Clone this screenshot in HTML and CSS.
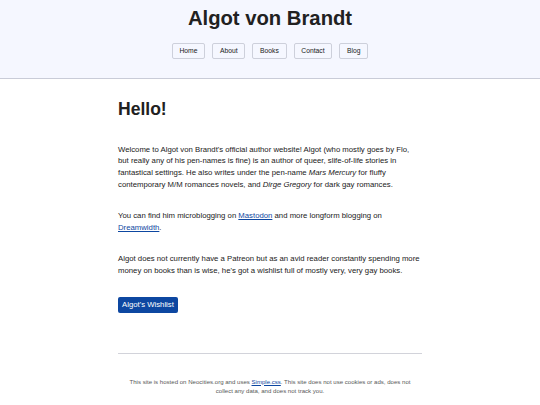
FILE: index.html
```
<!DOCTYPE html>
<html lang="en">
<head>
    <meta charset="UTF-8">
    <meta name="viewport" content="width=device-width, initial-scale=1.0">
    <title>Algot von Brandt</title>
    <link rel="stylesheet" href="styles.css">
</head>
<body>
    <header>
        <h1>Algot von Brandt</h1>
        <nav>
            <a href="index.html">Home</a>
            <a href="about.html">About</a>
            <a href="books.html">Books</a>
            <a href="contact.html">Contact</a>
            <a href="blog.html">Blog</a>
        </nav>
    </header>
    <main>
        <h2>Hello!</h2>
        <p>Welcome to Algot von Brandt's official author website! Algot (who mostly goes by Flo, but really any of his pen-names is fine) is an author of queer, slife-of-life stories in fantastical settings. He also writes under the pen-name <em>Mars Mercury</em> for fluffy contemporary M/M romances novels, and <em>Dirge Gregory</em> for dark gay romances.</p>
        <p>You can find him microblogging on <a href="#">Mastodon</a> and more longform blogging on <a href="#">Dreamwidth</a>.</p>
        <p>Algot does not currently have a Patreon but as an avid reader constantly spending more money on books than is wise, he's got a wishlist full of mostly very, very gay books.</p>
        <a class="button" href="#">Algot's Wishlist</a>
    </main>
    <footer>
        <p>This site is hosted on Neocities.org and uses <a href="#">Simple.css</a>. This site does not use cookies or ads, does not collect any data, and does not track you.</p>
    </footer>
</body>
</html>
```
FILE: styles.css
```
body { font-family: "Liberation Sans", Arial, sans-serif; margin: 0; color: #212121; background: #fff; font-size: 7.76px; line-height: 1.5; }
a { color: #0d47a1; }
header { background: #f5f7ff; border-bottom: 1px solid #c9ccd8; text-align: center; padding: 6.75px 4px 19px; }
header h1 { font-size: 20.25px; line-height: 1.1; margin: 0 0 6.75px; }
nav { font-size: 6.75px; line-height: 2; padding-top: 6.75px; height: 16px; }
nav a { display: inline-block; vertical-align: top; margin: 0 2.5px; color: #212121; text-decoration: none; border: 1px solid #cdd0db; border-radius: 2px; padding: 0 6.8px; line-height: 14.5px; }
main { width: 304px; margin: 0 auto; padding-top: 21px; }
h2 { font-size: 17.55px; line-height: 1.1; margin: 0 0 24.8px; }
p { margin: 0 0 20px; }
.button { display: inline-block; background: #0d47a1; color: #fff; text-decoration: none; border-radius: 2px; padding: 3.5px 4px; line-height: 9px; }
footer { width: 290px; margin: 40.5px auto 0; padding: 0 7px; border-top: 1px solid #d2d3da; text-align: center; color: #585858; font-size: 6.07px; }
footer p { margin: 0; padding: 23.5px 0 8px; }
```
